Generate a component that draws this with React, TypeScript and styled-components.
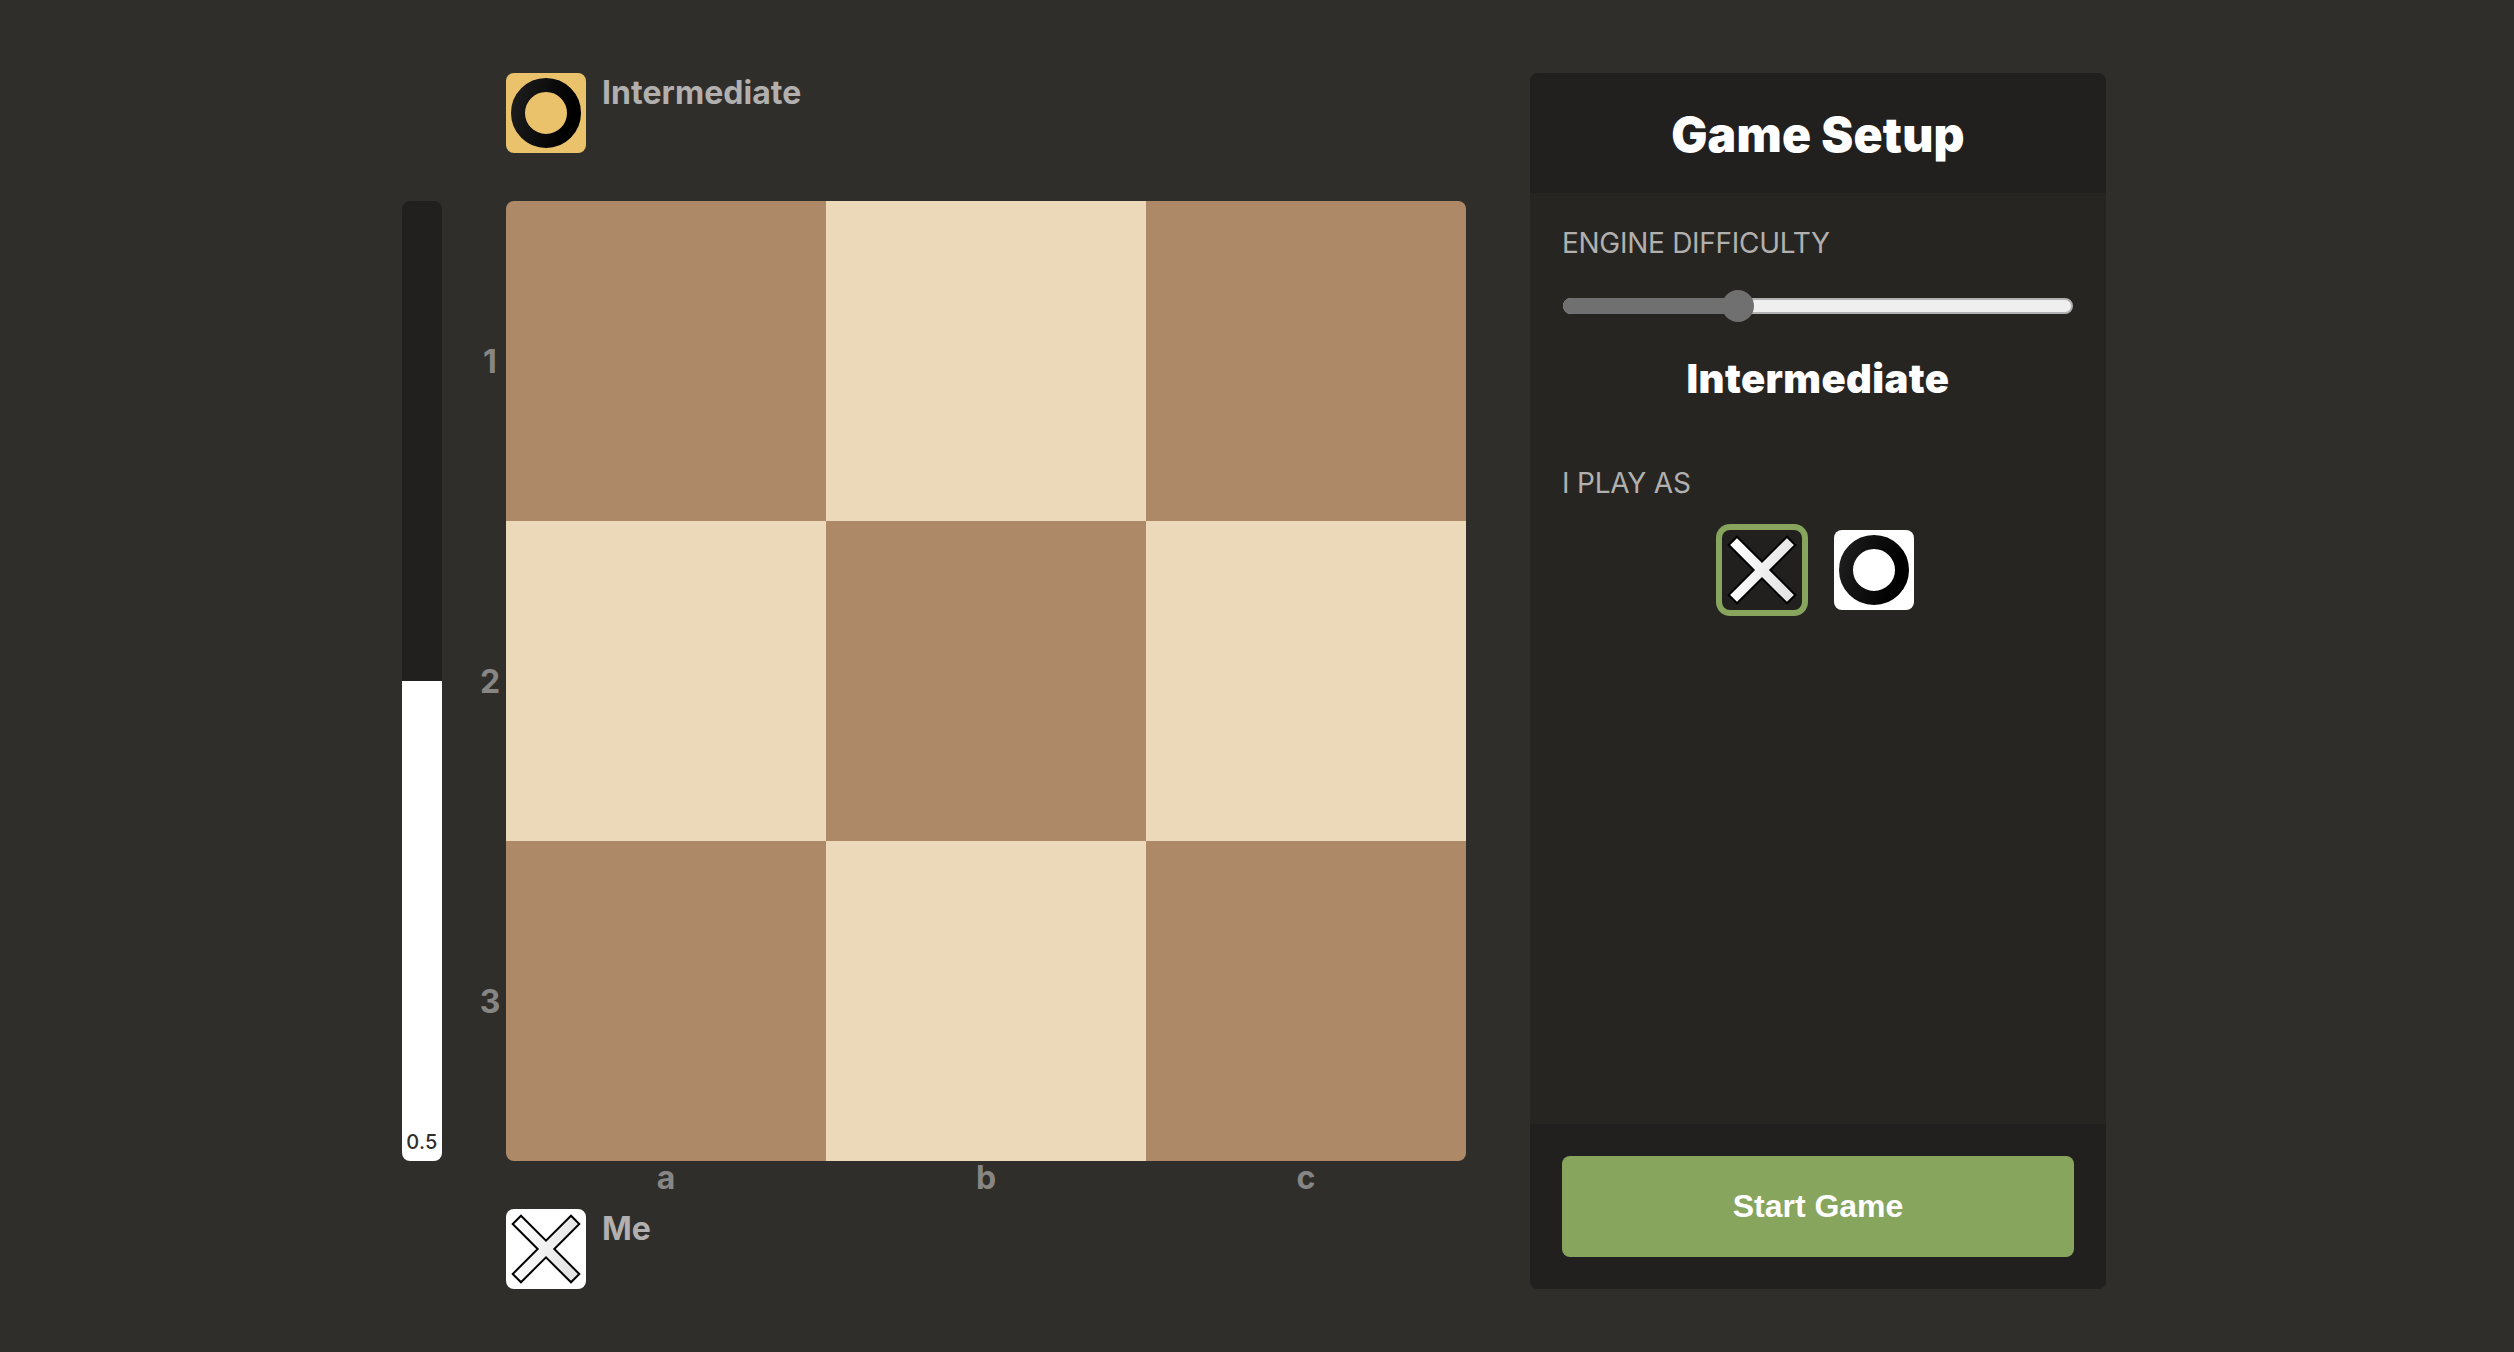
import React, { useState } from "react";
import styled, { createGlobalStyle } from "styled-components";

const SANS = `Inter, "Noto Sans", sans-serif`;

const GlobalStyle = createGlobalStyle`
  *, *::before, *::after { box-sizing: border-box; }
  body {
    margin: 0;
    background: #302e2b;
    color: #fff;
    font-family: ${SANS};
  }
`;

const Page = styled.main`
  display: flex;
  align-items: flex-start;
  min-height: 1352px;
  padding: 73px 0 0 402px;
`;

const EvalBar = styled.div`
  display: flex;
  flex-direction: column;
  justify-content: flex-end;
  width: 40px;
  height: 960px;
  margin: 128px 32px 0 0;
  border-radius: 8px;
  overflow: hidden;
  background: #22201e;
`;

const EvalLight = styled.div`
  display: flex;
  align-items: flex-end;
  justify-content: center;
  padding-bottom: 7px;
  background: #fff;
  color: #302e2b;
  font-size: 20px;
  font-weight: 500;
  line-height: 24px;
  letter-spacing: 0.3px;
`;

const coordinate = `
  color: #878685;
  font-size: 32px;
  font-weight: 700;
`;

const Ranks = styled.div`
  display: grid;
  grid-template-rows: repeat(3, 320px);
  align-items: center;
  justify-items: center;
  width: 32px;
  margin-top: 129px;
  line-height: 38px;
  ${coordinate}
`;

const Files = styled.div`
  display: grid;
  grid-template-columns: repeat(3, 320px);
  justify-items: center;
  height: 48px;
  line-height: 34px;
  ${coordinate}
`;

const BoardColumn = styled.section`
  display: flex;
  flex-direction: column;
  width: 960px;
`;

const PlayerRow = styled.div<{ $gap?: number }>`
  display: flex;
  align-items: flex-start;
  gap: 16px;
  height: 80px;
  margin-bottom: ${(p) => p.$gap ?? 0}px;
`;

const PlayerName = styled.span`
  color: #b1b0af;
  font-size: 32px;
  font-weight: 700;
  line-height: 39px;
  letter-spacing: 0.05px;
`;

const Tile = styled.div<{ $bg: string }>`
  display: flex;
  flex: none;
  width: 80px;
  height: 80px;
  border-radius: 8px;
  background: ${(p) => p.$bg};
`;

const Board = styled.div`
  display: grid;
  grid-template-columns: repeat(3, 320px);
  grid-template-rows: repeat(3, 320px);
  border-radius: 8px;
  overflow: hidden;
`;

const Square = styled.div<{ $dark: boolean }>`
  background: ${(p) => (p.$dark ? "#ae8968" : "#ecd9b9")};
`;

const Panel = styled.aside`
  display: flex;
  flex-direction: column;
  width: 576px;
  height: 1216px;
  margin-left: 64px;
  border-radius: 8px;
  overflow: hidden;
  background: #272522;
`;

const PanelHeader = styled.h1`
  display: flex;
  align-items: center;
  justify-content: center;
  height: 120px;
  margin: 0;
  padding-top: 2px;
  background: #22201e;
  font-size: 48px;
  font-weight: 900;
  letter-spacing: 0.25px;
`;

const PanelBody = styled.div`
  flex: 1;
  padding: 33px 32px 0;
`;

const Label = styled.div<{ $spacing: number }>`
  color: #b1b0af;
  font-size: 28px;
  line-height: 34px;
  letter-spacing: ${(p) => p.$spacing}px;
  text-transform: uppercase;
`;

const Slider = styled.div`
  position: relative;
  height: 16px;
  margin: 38px 1px 41px;
`;

const Track = styled.div`
  height: 16px;
  border: 2px solid #b2b2b2;
  border-radius: 8px;
  background: #efefef;
`;

const Fill = styled.div`
  position: absolute;
  inset: 0 auto 0 0;
  border-radius: 8px 0 0 8px;
  background: #707070;
`;

const Thumb = styled.div`
  position: absolute;
  top: -8px;
  width: 32px;
  height: 32px;
  margin-left: -16px;
  border-radius: 50%;
  background: #707070;
`;

const Level = styled.div`
  margin-bottom: 63px;
  font-size: 40px;
  font-weight: 900;
  line-height: 48px;
  letter-spacing: 0.4px;
  text-align: center;
`;

const Choices = styled.div`
  display: flex;
  justify-content: center;
  gap: 32px;
  margin-top: 30px;
`;

const Choice = styled(Tile)<{ $selected: boolean }>`
  cursor: pointer;
  box-shadow: ${(p) => (p.$selected ? "0 0 0 6px #87a55d" : "none")};
`;

const PanelFooter = styled.div`
  height: 165px;
  padding: 32px;
  background: #22201e;
`;

const StartButton = styled.button`
  display: block;
  width: 100%;
  height: 101px;
  padding: 0;
  border: 0;
  border-radius: 8px;
  background: #87a55d;
  color: #fff;
  font: 700 32px "Liberation Sans", Arial, sans-serif;
`;

function Cross({ id }: { id: string }) {
  return (
    <svg width="80" height="80" viewBox="-40 -40 80 80">
      <defs>
        <linearGradient id={id} x1="0" y1="0" x2="1" y2="0.25">
          <stop offset="0.1" stopColor="#fff" />
          <stop offset="1" stopColor="#e4e4e4" />
        </linearGradient>
      </defs>
      <path
        d="M-25-33.3 0-8.3 25-33.3 33.3-25 8.3 0 33.3 25 25 33.3 0 8.3-25 33.3-33.3 25-8.3 0-33.3-25Z"
        fill={`url(#${id})`}
        stroke="#000"
        strokeWidth="2"
      />
    </svg>
  );
}

function Nought({ id }: { id: string }) {
  return (
    <svg width="80" height="80" viewBox="-40 -40 80 80">
      <defs>
        <linearGradient id={id} x1="0" y1="0" x2="1" y2="0.25">
          <stop offset="0" stopColor="#1c1c1c" />
          <stop offset="1" stopColor="#000" />
        </linearGradient>
      </defs>
      <circle r="28" fill="none" stroke={`url(#${id})`} strokeWidth="14" />
    </svg>
  );
}

const SQUARES = Array.from({ length: 9 }, (_, i) => i % 2 === 0);

export default function App() {
  const [side, setSide] = useState<"x" | "o">("x");
  const difficulty = 34.3;
  const evaluation = 0.5;

  return (
    <>
      <GlobalStyle />
      <Page>
        <EvalBar>
          <EvalLight style={{ height: `${evaluation * 100}%` }}>{evaluation}</EvalLight>
        </EvalBar>
        <Ranks>
          <span>1</span>
          <span>2</span>
          <span>3</span>
        </Ranks>
        <BoardColumn>
          <PlayerRow $gap={48}>
            <Tile $bg="#ebc26c">
              <Nought id="engine-o" />
            </Tile>
            <PlayerName>Intermediate</PlayerName>
          </PlayerRow>
          <Board>
            {SQUARES.map((dark, i) => (
              <Square key={i} $dark={dark} />
            ))}
          </Board>
          <Files>
            <span>a</span>
            <span>b</span>
            <span>c</span>
          </Files>
          <PlayerRow>
            <Tile $bg="#fff">
              <Cross id="me-x" />
            </Tile>
            <PlayerName>Me</PlayerName>
          </PlayerRow>
        </BoardColumn>
        <Panel>
          <PanelHeader>Game Setup</PanelHeader>
          <PanelBody>
            <Label $spacing={-0.28}>Engine difficulty</Label>
            <Slider>
              <Track />
              <Fill style={{ width: `${difficulty}%` }} />
              <Thumb style={{ left: `${difficulty}%` }} />
            </Slider>
            <Level>Intermediate</Level>
            <Label $spacing={-0.2}>I play as</Label>
            <Choices>
              <Choice $bg="#22201e" $selected={side === "x"} onClick={() => setSide("x")}>
                <Cross id="pick-x" />
              </Choice>
              <Choice $bg="#fff" $selected={side === "o"} onClick={() => setSide("o")}>
                <Nought id="pick-o" />
              </Choice>
            </Choices>
          </PanelBody>
          <PanelFooter>
            <StartButton>Start Game</StartButton>
          </PanelFooter>
        </Panel>
      </Page>
    </>
  );
}
